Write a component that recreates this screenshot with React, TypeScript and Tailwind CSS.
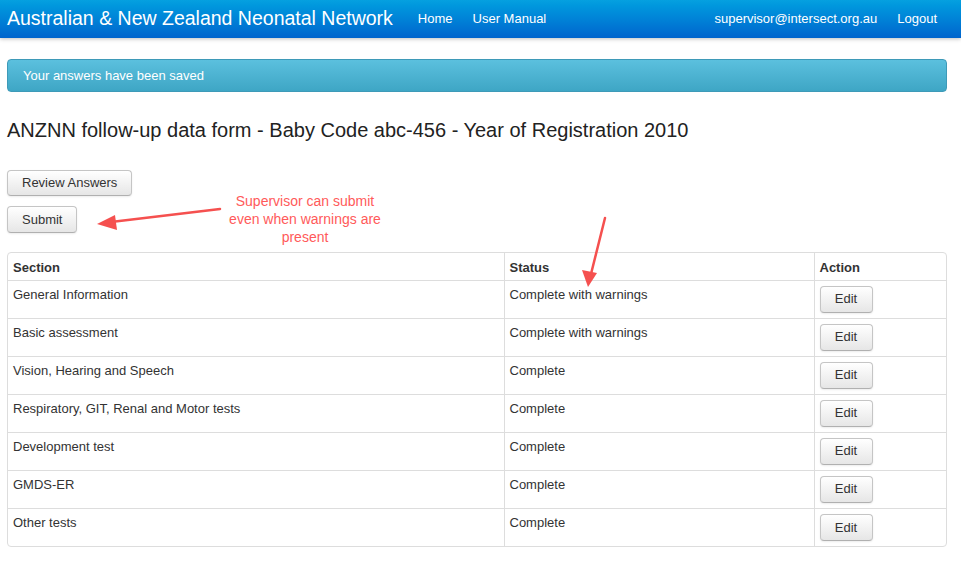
const rows: [string, string][] = [
  ["General Information", "Complete with warnings"],
  ["Basic assessment", "Complete with warnings"],
  ["Vision, Hearing and Speech", "Complete"],
  ["Respiratory, GIT, Renal and Motor tests", "Complete"],
  ["Development test", "Complete"],
  ["GMDS-ER", "Complete"],
  ["Other tests", "Complete"],
];

const btn =
  "rounded-[4px] border border-[#c5c5c5] border-b-[#b0b0b0] bg-gradient-to-b from-white to-[#e6e6e6] text-[13px] text-[#333] shadow-[inset_0_1px_0_rgba(255,255,255,0.3),0_1px_2px_rgba(0,0,0,0.08)]";

function NavBar() {
  return (
    <div className="h-[38px] bg-gradient-to-b from-[#05a0e0] to-[#0064cd] shadow-[0_1px_4px_rgba(0,0,0,0.25)]">
      <div className="flex h-full w-[940px] items-center ml-[7px]">
        <span className="text-[19.5px] text-white">Australian &amp; New Zealand Neonatal Network</span>
        <a className="ml-[25px] text-[13px] text-white">Home</a>
        <a className="ml-[20px] text-[13px] text-white">User Manual</a>
        <a className="ml-auto text-[13px] text-white">supervisor@intersect.org.au</a>
        <a className="ml-[20px] mr-[10px] text-[13px] text-white">Logout</a>
      </div>
    </div>
  );
}

export default function App() {
  return (
    <div className="min-h-[566px] bg-white font-['Liberation_Sans',Arial,sans-serif] text-[#333]">
      <NavBar />
      <div className="relative ml-[7px] w-[940px] pt-[21px]">
        <div className="flex h-[33px] items-center rounded-[4px] border border-[#3e9ab8] bg-gradient-to-b from-[#5bc0de] to-[#3ea6c5] pl-[15px] text-[13px] text-white">
          Your answers have been saved
        </div>
        <h1 className="mt-[26px] text-[20px] leading-[24px] text-[#222]">
          ANZNN follow-up data form - Baby Code abc-456 - Year of Registration 2010
        </h1>
        <div className="mt-[28px] flex flex-col items-start gap-[10px]">
          <button className={`${btn} h-[26px] px-[14px]`}>Review Answers</button>
          <button className={`${btn} h-[27px] px-[14px]`}>Submit</button>
        </div>
        <div className="mt-[19px] overflow-hidden rounded-[4px] border border-[#ddd]">
          <table className="w-full border-collapse text-[13px] text-[#333]">
            <thead>
              <tr className="h-[27px]">
                <th className="w-[496px] px-[5px] pt-[2px] text-left font-bold">Section</th>
                <th className="w-[310px] border-l border-[#ddd] px-[5px] pt-[2px] text-left font-bold">Status</th>
                <th className="border-l border-[#ddd] px-[5px] pt-[2px] text-left font-bold">Action</th>
              </tr>
            </thead>
            <tbody>
              {rows.map(([s, st]) => (
                <tr key={s} className="h-[38px] border-t border-[#ddd]">
                  <td className="px-[5px] pt-[4px] align-top">{s}</td>
                  <td className="border-l border-[#ddd] px-[5px] pt-[4px] align-top">{st}</td>
                  <td className="border-l border-[#ddd] px-[5px] align-middle">
                    <button className={`${btn} h-[27px] w-[53px]`}>Edit</button>
                  </td>
                </tr>
              ))}
            </tbody>
          </table>
        </div>

        {/* annotation */}
        <div className="absolute left-[218px] top-[154px] w-[160px] text-center text-[14px] leading-[18px] text-[#ff5a5a]">
          Supervisor can submit even when warnings are present
        </div>
        <svg className="pointer-events-none absolute left-0 top-0" width="940" height="300">
          <line x1="213" y1="171" x2="104" y2="184" stroke="#f5504f" strokeWidth="2.5" strokeLinecap="round" />
          <polygon points="90,186 108,177 110,192" fill="#f5504f" />
          <line x1="598" y1="180" x2="584" y2="236" stroke="#f5504f" strokeWidth="2.5" strokeLinecap="round" />
          <polygon points="581,249 575,232 590,235" fill="#f5504f" />
        </svg>
      </div>
    </div>
  );
}
